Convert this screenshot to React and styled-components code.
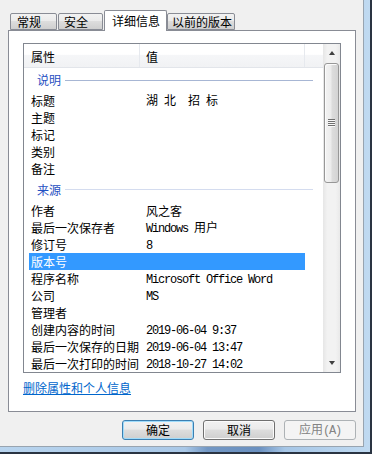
import React from 'react';
import styled, { createGlobalStyle } from 'styled-components';

const GlobalStyle = createGlobalStyle`
  html, body { margin: 0; padding: 0; }
  body {
    background: #24303d;
    font-family: "Noto Sans CJK SC", "Noto Sans", sans-serif;
    font-size: 12px;
    color: #000;
  }
  * { box-sizing: border-box; }
`;

const Screen = styled.div`
  width: 372px;
  height: 454px;
  overflow: hidden;
  background: #2a3442;
`;

const Frame = styled.div`
  width: 370px;
  height: 452px;
  padding: 0 6px 5px 0;
  background: linear-gradient(90deg, #b8d4ee 0%, #a9c8e7 50%, #7297c4 56%, #6a90c0 70%, #a6c6e6 77%, #c0daf1 100%);
`;

const Window = styled.div`
  width: 364px;
  height: 447px;
  background: #f0f0f0;
  border-right: 1px solid #98a4b0;
  border-bottom: 1px solid #98a4b0;
  padding: 10px 0 0 8px;
  display: flex;
  flex-direction: column;
`;

const TabBar = styled.div`
  height: 20px;
  display: flex;
  align-items: flex-end;
  padding-left: 2px;
`;

const Tab = styled.div`
  width: ${p => p.w}px;
  margin-left: ${p => p.ml || 0}px;
  padding-left: ${p => p.pl}px;
  height: ${p => (p.active ? 21 : 17)}px;
  margin-bottom: ${p => (p.active ? -1 : 0)}px;
  position: relative;
  z-index: ${p => (p.active ? 2 : 1)};
  border: 1px solid #898c95;
  border-bottom: ${p => (p.active ? 'none' : '1px solid #898c95')};
  border-radius: 2px 2px 0 0;
  background: ${p => (p.active
    ? '#ffffff'
    : 'linear-gradient(180deg, #f2f2f2 0%, #ebebeb 45%, #dddddd 50%, #cfcfcf 100%)')};
  display: flex;
  align-items: center;
  padding-bottom: ${p => (p.active ? 2 : 0)}px;
  white-space: nowrap;
  line-height: 15px;
`;

const Panel = styled.div`
  width: 348px;
  height: 382px;
  background: #ffffff;
  border: 1px solid #898c95;
  padding: 12px 0 0 14px;
  display: flex;
  flex-direction: column;
`;

const ListView = styled.div`
  width: 318px;
  height: 330px;
  border: 1px solid #828790;
  display: flex;
  background: #fff;
`;

const ListBody = styled.div`
  flex: 1;
  display: flex;
  flex-direction: column;
  overflow: hidden;
`;

const HeaderRow = styled.div`
  height: 24px;
  flex: none;
  display: flex;
  border-bottom: 1px solid #e2e5ea;
  background: linear-gradient(180deg, #ffffff 0%, #ffffff 45%, #f5f6f8 50%, #f1f2f4 100%);
`;

const HeaderCell = styled.div`
  width: ${p => (p.w ? `${p.w}px` : 'auto')};
  flex: ${p => (p.w ? 'none' : 1)};
  padding-left: ${p => p.pl || 0}px;
  padding-top: 2px;
  display: flex;
  align-items: center;
  border-right: 1px solid ${p => (p.last ? 'transparent' : '#e6e9ee')};
  line-height: 16px;
`;

const GroupHeader = styled.div`
  height: ${p => p.h}px;
  flex: none;
  display: flex;
  align-items: center;
  padding-left: 13px;
  padding-right: 10px;
  color: #1f4fc2;
  line-height: 16px;
`;

const GroupLine = styled.div`
  flex: 1;
  height: 1px;
  margin-left: 4px;
  background: ${p => (p.faint ? '#d4dcef' : '#a7b6d4')};
`;

const Row = styled.div`
  height: 17px;
  flex: none;
  width: 276px;
  margin-left: 5px;
  display: flex;
  align-items: center;
  background: ${p => (p.selected ? '#3399ff' : 'transparent')};
  color: ${p => (p.selected ? '#fff' : '#000')};
  line-height: 17px;
  white-space: pre;
`;

const LabelCell = styled.div`
  width: 111px;
  padding-left: 2px;
  flex: none;
`;

const ValueCell = styled.div`
  flex: 1;
  padding-left: 6px;
`;

const Latin = styled.span`
  font-family: "Liberation Mono", "DejaVu Sans Mono", monospace;
  font-size: 12px;
  letter-spacing: -1.2px;
`;

const ScrollBar = styled.div`
  width: 17px;
  flex: none;
  display: flex;
  flex-direction: column;
  background: linear-gradient(90deg, #e6e6e6 0%, #f2f2f2 25%, #f2f2f2 75%, #e9e9e9 100%);
`;

const ArrowBtn = styled.div`
  height: 18px;
  flex: none;
  display: flex;
  align-items: center;
  justify-content: center;
  margin-top: ${p => (p.down ? 'auto' : 0)};
`;

const Triangle = styled.div`
  width: 0;
  height: 0;
  border-left: 3.5px solid transparent;
  border-right: 3.5px solid transparent;
  ${p => (p.down
    ? 'border-top: 4px solid #404040;'
    : 'border-bottom: 4px solid #404040;')}
`;

const Thumb = styled.div`
  height: 120px;
  margin: 1px 1px 0;
  border: 1px solid #979797;
  border-radius: 3px;
  background: linear-gradient(90deg, #f3f3f3 0%, #ececec 45%, #dcdcdc 55%, #d3d3d3 100%);
  box-shadow: inset 1px 1px 0 #fbfbfb;
  display: flex;
  align-items: center;
  justify-content: center;
`;

const Grip = styled.div`
  width: 7px;
  height: 8px;
  background: repeating-linear-gradient(180deg, #707070 0 1px, #f8f8f8 1px 2px);
`;

const Link = styled.a`
  margin-top: 7px;
  line-height: 16px;
  color: #0066cc;
  text-decoration: underline;
  width: fit-content;
  cursor: pointer;
`;

const ButtonRow = styled.div`
  width: 348px;
  margin-top: 8px;
  display: flex;
  justify-content: flex-end;
  gap: 9px;
`;

const Button = styled.button`
  width: 72px;
  height: 20px;
  padding: 0;
  font-family: "Noto Sans CJK SC", sans-serif;
  font-size: 12px;
  line-height: 16px;
  border-radius: 3px;
  border: 1px solid ${p => (p.primary ? '#3c7fb1' : p.disabled ? '#adb2b5' : '#707070')};
  color: ${p => (p.disabled ? '#838383' : '#000')};
  background: ${p => (p.disabled
    ? '#f4f4f4'
    : 'linear-gradient(180deg, #f2f2f2 0%, #ebebeb 45%, #dddddd 50%, #cfcfcf 100%)')};
  box-shadow: ${p => (p.primary
    ? 'inset 0 0 0 1px #9fdcfb'
    : p.disabled ? 'none' : 'inset 0 0 0 1px #fbfbfb')};
  white-space: pre;
`;

// split a string into CJK and half-width runs, so ASCII gets the narrow mono font
const Mixed = ({ text }) => {
  const parts = text.split(/([\x20-\x7e]+)/).filter(Boolean);
  return parts.map((s, i) => (/^[\x20-\x7e]+$/.test(s) ? <Latin key={i}>{s}</Latin> : <span key={i}>{s}</span>));
};

const groups = [
  {
    title: '说明',
    h: 24,
    rows: [
      ['标题', '湖 北  招 标'],
      ['主题', ''],
      ['标记', ''],
      ['类别', ''],
      ['备注', ''],
    ],
  },
  {
    title: '来源',
    h: 25,
    faint: true,
    rows: [
      ['作者', '风之客'],
      ['最后一次保存者', 'Windows 用户'],
      ['修订号', '8'],
      ['版本号', '', true],
      ['程序名称', 'Microsoft Office Word'],
      ['公司', 'MS'],
      ['管理者', ''],
      ['创建内容的时间', '2019-06-04 9:37'],
      ['最后一次保存的日期', '2019-06-04 13:47'],
      ['最后一次打印的时间', '2018-10-27 14:02'],
    ],
  },
];

const tabs = [
  { label: '常规', w: 47, pl: 6 },
  { label: '安全', w: 45, pl: 5, ml: 1 },
  { label: '详细信息', w: 63, pl: 7, ml: 1, active: true },
  { label: '以前的版本', w: 68, pl: 4 },
];

export default function App() {
  return (
    <Screen>
      <GlobalStyle />
      <Frame>
        <Window>
          <TabBar>
            {tabs.map(t => (
              <Tab key={t.label} w={t.w} pl={t.pl} ml={t.ml} active={t.active}>{t.label}</Tab>
            ))}
          </TabBar>
          <Panel>
            <ListView>
              <ListBody>
                <HeaderRow>
                  <HeaderCell w={116} pl={7}>属性</HeaderCell>
                  <HeaderCell w={165} pl={6}>值</HeaderCell>
                  <HeaderCell last />
                </HeaderRow>
                {groups.map(g => (
                  <React.Fragment key={g.title}>
                    <GroupHeader h={g.h}>
                      {g.title}
                      <GroupLine faint={g.faint} />
                    </GroupHeader>
                    {g.rows.map(([label, value, selected]) => (
                      <Row key={label} selected={selected}>
                        <LabelCell>{label}</LabelCell>
                        <ValueCell><Mixed text={value} /></ValueCell>
                      </Row>
                    ))}
                  </React.Fragment>
                ))}
              </ListBody>
              <ScrollBar>
                <ArrowBtn><Triangle /></ArrowBtn>
                <Thumb><Grip /></Thumb>
                <ArrowBtn down><Triangle down /></ArrowBtn>
              </ScrollBar>
            </ListView>
            <Link>删除属性和个人信息</Link>
          </Panel>
          <ButtonRow>
            <Button primary>确定</Button>
            <Button>取消</Button>
            <Button disabled>应用<Latin>(A)</Latin></Button>
          </ButtonRow>
        </Window>
      </Frame>
    </Screen>
  );
}
